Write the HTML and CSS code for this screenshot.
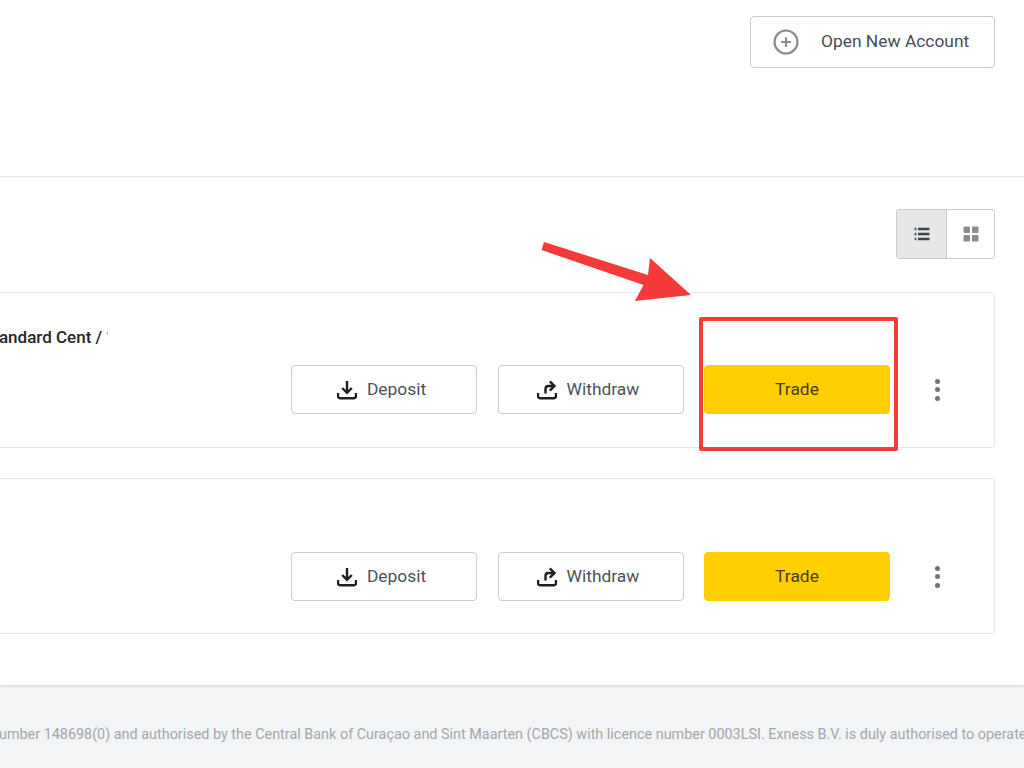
FILE: index.html
```html
<!DOCTYPE html>
<html lang="en">
<head>
<meta charset="utf-8">
<title>Accounts</title>
<link rel="stylesheet" href="styles.css">
</head>
<body>
<div class="page">
  <main class="main">
    <header class="header">
      <button class="btn-open">
        <svg class="icon-plus" viewBox="0 0 24 24" width="26" height="26"><circle cx="12" cy="12" r="10.6" fill="none" stroke="#8b8b8b" stroke-width="2"/><path d="M12 7.5v9M7.5 12h9" stroke="#8b8b8b" stroke-width="2" fill="none"/></svg>
        <span class="label">Open New Account</span>
      </button>
    </header>
    <section class="section">
      <div class="toolbar">
        <div class="switch">
          <div class="switch-item active">
            <svg viewBox="0 0 16 14" width="16" height="14"><path d="M4 2h11.500M4 7h11.500M4 12h11.500" stroke="#3f4246" stroke-width="2.400" fill="none"/><path d="M.5 2h2M.5 7h2M.5 12h2" stroke="#5c6064" stroke-width="2.400" fill="none"/></svg>
          </div>
          <div class="switch-item">
            <svg viewBox="0 0 16 16" width="16" height="16"><rect x="0.500" y="0.500" width="6.500" height="6.500" rx="1" fill="#8c8c8c"/><rect x="9" y="0.500" width="6.500" height="6.500" rx="1" fill="#8c8c8c"/><rect x="0.500" y="9" width="6.500" height="6.500" rx="1" fill="#8c8c8c"/><rect x="9" y="9" width="6.500" height="6.500" rx="1" fill="#8c8c8c"/></svg>
          </div>
        </div>
      </div>
      <div class="cards">
        <article class="card">
          <div class="card-title">Standard Cent / <span class="card-title-rest">'</span></div>
          <div class="actions">
            <button class="btn btn-icon"><svg viewBox="0 0 20 20" width="20" height="20"><path d="M10 1v11.500M5.200 8l4.800 4.800L14.800 8" fill="none" stroke="#1c1f22" stroke-width="2.400"/><path d="M1 13v3.200q0 2 2 2h14q2 0 2-2V13" fill="none" stroke="#1c1f22" stroke-width="2.400"/></svg><span class="label">Deposit</span></button>
            <button class="btn btn-icon"><svg viewBox="0 0 20 20" width="20" height="20"><path d="M8.500 13.500V9q0-3 3-3h5.500M12.800 1.400 17.500 6l-4.700 4.600" fill="none" stroke="#1c1f22" stroke-width="2.400"/><path d="M1 13v3.200q0 2 2 2h14q2 0 2-2V13" fill="none" stroke="#1c1f22" stroke-width="2.400"/></svg><span class="label">Withdraw</span></button>
            <button class="btn btn-trade"><span class="label">Trade</span></button>
            <div class="kebab"><i></i><i></i><i></i></div>
          </div>
        </article>
        <article class="card">
          <div class="card-title card-title-tall"></div>
          <div class="actions">
            <button class="btn btn-icon"><svg viewBox="0 0 20 20" width="20" height="20"><path d="M10 1v11.500M5.200 8l4.800 4.800L14.800 8" fill="none" stroke="#1c1f22" stroke-width="2.400"/><path d="M1 13v3.200q0 2 2 2h14q2 0 2-2V13" fill="none" stroke="#1c1f22" stroke-width="2.400"/></svg><span class="label">Deposit</span></button>
            <button class="btn btn-icon"><svg viewBox="0 0 20 20" width="20" height="20"><path d="M8.500 13.500V9q0-3 3-3h5.500M12.800 1.400 17.500 6l-4.700 4.600" fill="none" stroke="#1c1f22" stroke-width="2.400"/><path d="M1 13v3.200q0 2 2 2h14q2 0 2-2V13" fill="none" stroke="#1c1f22" stroke-width="2.400"/></svg><span class="label">Withdraw</span></button>
            <button class="btn btn-trade"><span class="label">Trade</span></button>
            <div class="kebab"><i></i><i></i><i></i></div>
          </div>
        </article>
      </div>
    </section>
  </main>
  <footer class="footer">
    <p>number 148698(0) and authorised by the Central Bank of Curaçao and Sint Maarten (CBCS) with licence number 0003LSI. Exness B.V. is duly authorised to operate</p>
  </footer>
  <svg class="arrow" viewBox="0 0 1024 768" width="1024" height="768"><polygon points="544,242 541.500,250 643.500,285 635,301 691,295 650,258 648,275" fill="#f53a3a"/></svg>
  <div class="highlight"></div>
</div>
</body>
</html>
```

FILE: styles.css
```css
* { box-sizing: border-box; }
html, body { margin: 0; padding: 0; background: #fff; }
body { font-family: Roboto, "Liberation Sans", sans-serif; color: #2b3238; }
button { font-family: inherit; cursor: pointer; }

.page {
  position: relative;
  width: 1024px;
  height: 768px;
  overflow: hidden;
  display: flex;
  flex-direction: column;
}

.main {
  height: 685px;
  background: #fff;
  box-shadow: 0 1px 4px rgba(0, 0, 0, .12);
  position: relative;
}

.header {
  height: 177px;
  padding: 16px 29px 0 0;
  display: flex;
  justify-content: flex-end;
  align-items: flex-start;
  border-bottom: 1px solid #e9eaeb;
}

.btn-open {
  width: 245px;
  height: 52px;
  padding: 0 0 0 22px;
  display: flex;
  align-items: center;
  gap: 22px;
  background: #fff;
  border: 1px solid #c9cbcd;
  border-radius: 4px;
  font-size: 17.4px;
  color: #454d55;
}

.label { margin-top: -2px; }

.section { padding: 32px 29px 0 0; }

.toolbar { display: flex; justify-content: flex-end; }

.switch {
  display: flex;
  height: 50px;
  width: 99px;
  border: 1px solid #c9cbcd;
  border-radius: 3px;
  overflow: hidden;
}

.switch-item {
  flex: 1;
  display: flex;
  align-items: center;
  justify-content: center;
}

.switch-item.active {
  flex: 0 0 50px;
  background: #e6e7e8;
  border-right: 1px solid #c9cbcd;
}

.cards {
  margin: 33px 0 0 -10px;
  display: flex;
  flex-direction: column;
  gap: 30px;
}

.card {
  height: 156px;
  border: 1px solid #e7e8e9;
  border-radius: 3px;
  display: flex;
  flex-direction: column;
}

.card-title {
  height: 72px;
  padding-top: 34px;
  margin-left: -8px;
  font-size: 17px;
  line-height: 20px;
  font-weight: 500;
  color: #22272b;
  white-space: nowrap;
}

.card-title-tall { height: 73px; }

.card-title-rest {
  color: #9a9a9a;
  font-size: 10px;
  vertical-align: 3px;
}

.actions {
  display: flex;
  justify-content: flex-end;
  gap: 20.5px;
  padding-right: 30px;
}

.btn {
  width: 186px;
  height: 49px;
  display: flex;
  align-items: center;
  justify-content: center;
  gap: 10px;
  background: #fff;
  border: 1px solid #c9cbcd;
  border-radius: 4px;
  font-size: 17.4px;
  color: #4a525a;
}

.btn-icon { padding: 0 5px 0 0; }

.btn-trade {
  background: #ffcf01;
  border-color: #ffcf01;
  color: #4a3a10;
}

.kebab {
  width: 54px;
  height: 49px;
  display: flex;
  flex-direction: column;
  align-items: center;
  justify-content: center;
  gap: 3.5px;
  margin-left: -.5px;
}

.kebab i {
  width: 5px;
  height: 5px;
  border-radius: 50%;
  background: #6f7478;
}

.footer {
  flex: 1;
  background: #f2f4f5;
  padding-top: 41px;
}

.footer p {
  margin: 0 0 0 -9px;
  font-size: 14.4px;
  line-height: 18px;
  color: #a3a7ab;
  white-space: nowrap;
}

.arrow {
  position: absolute;
  left: 0;
  top: 0;
  pointer-events: none;
}

.highlight {
  position: absolute;
  left: 699px;
  top: 317px;
  width: 199px;
  height: 134px;
  border: 4px solid #f53a3a;
  border-radius: 2px;
}
```
